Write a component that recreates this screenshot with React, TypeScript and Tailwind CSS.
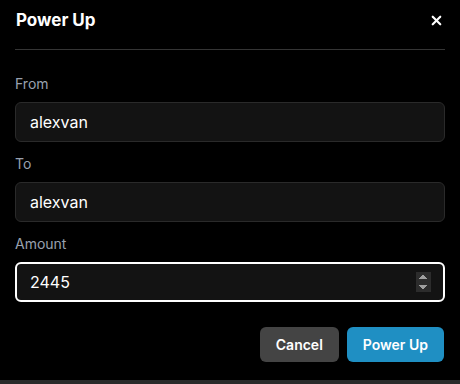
import { X } from "lucide-react";

export default function App() {
  return (
    <div className="w-[460px] h-[384px] bg-black flex flex-col font-['Inter',sans-serif] text-white">
      <div className="flex items-center justify-between px-4 pt-[10px] pb-[19px]">
        <h2 className="text-[17px] font-bold leading-[20px]">Power Up</h2>
        <button className="text-white">
          <X className="w-[15px] h-[15px]" strokeWidth={3.5} />
        </button>
      </div>
      <div className="mx-[15px] h-px bg-[#353535]" />

      <div className="flex flex-col px-[15px] pt-[24px]">
        <label className="text-sm text-gray-400 leading-5 mb-[8px]">From</label>
        <input
          className="h-[40px] rounded-md bg-[#131313] border border-[#2a2a2a] px-[14px] text-base text-white outline-none"
          defaultValue="alexvan"
        />

        <label className="text-sm text-gray-400 leading-5 mt-[12px] mb-[8px]">To</label>
        <input
          className="h-[40px] rounded-md bg-[#131313] border border-[#2a2a2a] px-[14px] text-base text-white outline-none"
          defaultValue="alexvan"
        />

        <label className="text-sm text-gray-400 leading-5 mt-[12px] mb-[8px]">Amount</label>
        <input
          type="number"
          autoFocus
          className="h-[40px] rounded-md bg-[#131313] border-2 border-white pl-[13px] pr-[12px] text-base text-white outline-none [color-scheme:dark]"
          defaultValue="2445"
        />

        <div className="flex justify-end gap-2 mt-[25px] pr-px">
          <button className="h-[35px] px-[16px] rounded-md bg-[#444444] text-sm font-semibold text-white">
            Cancel
          </button>
          <button className="h-[35px] px-[16px] rounded-md bg-[#1f8fc3] text-sm font-semibold text-white">
            Power Up
          </button>
        </div>
      </div>
      <div className="mt-auto h-[4px] bg-[#2a2a2a]" />
    </div>
  );
}
